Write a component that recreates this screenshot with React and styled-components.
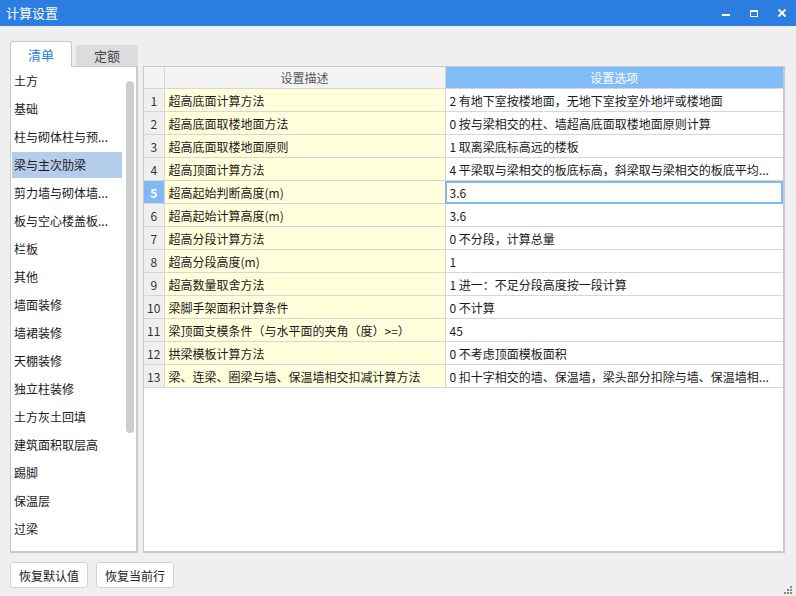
import React from 'react';
import styled, { createGlobalStyle } from 'styled-components';

const GlobalStyle = createGlobalStyle`
    html, body {
        margin: 0;
        padding: 0;
        background: #efefef;
    }
    body {
        font-family: "Noto Sans CJK SC", "Microsoft YaHei", sans-serif;
        font-size: 12px;
        color: #222;
    }
`;

const Window = styled.div`
    width: 796px;
    height: 596px;
    display: flex;
    flex-direction: column;
    background: #efefef;
    overflow: hidden;
`;

const TitleBar = styled.div`
    height: 26px;
    flex: none;
    background: #2b7de0;
    display: flex;
    align-items: center;
    justify-content: space-between;
`;

const Title = styled.div`
    color: #fff;
    font-size: 13px;
    padding-left: 6px;
    line-height: 26px;
`;

const Controls = styled.div`
    display: flex;
    height: 26px;
`;

const ControlButton = styled.div`
    width: 28px;
    height: 26px;
    display: flex;
    align-items: center;
    justify-content: center;
`;

const Body = styled.div`
    flex: 1;
    display: flex;
    flex-direction: column;
    padding: 15px 11px 0 10px;
`;

const TabRow = styled.div`
    display: flex;
    align-items: flex-end;
    height: 25px;
    gap: 4px;
`;

const Tab = styled.div`
    width: ${p => (p.$active ? '60px' : '62px')};
    height: ${p => (p.$active ? '25px' : '21px')};
    display: flex;
    align-items: center;
    justify-content: center;
    background: ${p => (p.$active ? '#fff' : '#dcdcdc')};
    color: ${p => (p.$active ? '#2b7de0' : '#444')};
    border: ${p => (p.$active ? '1px solid #c9c9c9' : 'none')};
    border-bottom: none;
    border-radius: 3px 3px 0 0;
    font-size: 13px;
    position: relative;
    z-index: 1;
    margin-bottom: ${p => (p.$active ? '-1px' : '0')};
`;

const Content = styled.div`
    height: 487px;
    display: flex;
    gap: 5px;
    flex: none;
`;

const ListPanel = styled.div`
    width: 125px;
    background: #fff;
    border: 1px solid #c9c9c9;
    border-right-width: 2px;
    border-bottom-width: 2px;
    display: flex;
    overflow: hidden;
`;

const ItemList = styled.div`
    width: 110px;
    padding: 0 1px;
    display: flex;
    flex-direction: column;
`;

const Item = styled.div`
    height: 26px;
    margin: 1px 0;
    flex: none;
    line-height: 26px;
    padding-left: 2px;
    white-space: nowrap;
    overflow: hidden;
    font-size: 12px;
    color: #1a1a1a;
    background: ${p => (p.$selected ? '#b4cdeb' : 'transparent')};
`;

const ScrollTrack = styled.div`
    width: 8px;
    margin-left: 3px;
    padding-top: 14px;
`;

const ScrollThumb = styled.div`
    width: 8px;
    height: 352px;
    border-radius: 4px;
    background: #cdcdcd;
`;

const TablePanel = styled.div`
    flex: 1;
    background: #fff;
    border: 1px solid #c9c9c9;
    border-right-width: 2px;
    border-bottom-width: 2px;
    overflow: hidden;
`;

const Grid = styled.table`
    width: 100%;
    table-layout: fixed;
    border-collapse: collapse;
    font-size: 12px;
`;

const HeadCell = styled.th`
    height: 21px;
    padding: 0;
    font-weight: normal;
    font-size: 12px;
    text-align: center;
    border: 1px solid #d6d6d6;
    border-top: none;
    background: ${p => (p.$accent ? '#80bcf8' : '#f4f4f4')};
    color: ${p => (p.$accent ? '#fff' : '#555')};
    &:first-child { border-left: none; }
    &:last-child { border-right: none; }
`;

const NumCell = styled.td`
    height: 22px;
    padding: 0;
    text-align: center;
    border: 1px solid #d6d6d6;
    border-left: none;
    background: ${p => (p.$current ? '#80b9f6' : '#efefef')};
    color: ${p => (p.$current ? '#fff' : '#333')};
    font-weight: ${p => (p.$current ? 'bold' : 'normal')};
`;

const Cell = styled.td`
    height: 22px;
    padding: 0 0 0 4px;
    border: 1px solid #d6d6d6;
    white-space: nowrap;
    overflow: hidden;
    color: #1a1a1a;
    background: ${p => (p.$desc ? '#ffffdc' : '#fff')};
    outline: ${p => (p.$editing ? '2px solid #80b9f6' : 'none')};
    outline-offset: -2px;
    &:last-child { border-right: none; }
`;

const Footer = styled.div`
    flex: 1;
    display: flex;
    align-items: flex-start;
    gap: 8px;
    padding-top: 9px;
    margin-right: -11px;
`;

const Button = styled.button`
    width: 78px;
    height: 26px;
    padding: 0;
    background: #fff;
    border: 1px solid #d2d2d2;
    border-radius: 3px;
    font-family: inherit;
    font-size: 12px;
    color: #222;
`;

const Grip = styled.svg`
    margin-left: auto;
    align-self: flex-end;
    margin-bottom: 1px;
    margin-right: 3px;
`;

const categories = [
    '土方', '基础', '柱与砌体柱与预...', '梁与主次肋梁', '剪力墙与砌体墙...',
    '板与空心楼盖板...', '栏板', '其他', '墙面装修', '墙裙装修', '天棚装修',
    '独立柱装修', '土方灰土回填', '建筑面积取层高', '踢脚', '保温层', '过梁', '砌体加筋',
];

const rows = [
    ['超高底面计算方法', '2 有地下室按楼地面，无地下室按室外地坪或楼地面'],
    ['超高底面取楼地面方法', '0 按与梁相交的柱、墙超高底面取楼地面原则计算'],
    ['超高底面取楼地面原则', '1 取离梁底标高远的楼板'],
    ['超高顶面计算方法', '4 平梁取与梁相交的板底标高，斜梁取与梁相交的板底平均...'],
    ['超高起始判断高度(m)', '3.6'],
    ['超高起始计算高度(m)', '3.6'],
    ['超高分段计算方法', '0 不分段，计算总量'],
    ['超高分段高度(m)', '1'],
    ['超高数量取舍方法', '1 进一：不足分段高度按一段计算'],
    ['梁脚手架面积计算条件', '0 不计算'],
    ['梁顶面支模条件（与水平面的夹角（度）>=）', '45'],
    ['拱梁模板计算方法', '0 不考虑顶面模板面积'],
    ['梁、连梁、圈梁与墙、保温墙相交扣减计算方法', '0 扣十字相交的墙、保温墙，梁头部分扣除与墙、保温墙相...'],
];

const App = () => {
    const current = 5;
    return (
        <Window>
            <GlobalStyle />
            <TitleBar>
                <Title>计算设置</Title>
                <Controls>
                    <ControlButton>
                        <svg width="10" height="10" viewBox="0 0 10 10">
                            <rect x="1" y="6" width="8" height="2" fill="#fff" />
                        </svg>
                    </ControlButton>
                    <ControlButton>
                        <svg width="10" height="10" viewBox="0 0 10 10">
                            <rect x="1.5" y="2.5" width="7" height="6" fill="none" stroke="#fff" strokeWidth="1" />
                            <rect x="1" y="2" width="8" height="2" fill="#fff" />
                        </svg>
                    </ControlButton>
                    <ControlButton>
                        <svg width="10" height="10" viewBox="0 0 10 10">
                            <path d="M1.5 1.5 L8.5 8.5 M8.5 1.5 L1.5 8.5" stroke="#fff" strokeWidth="1.8" />
                        </svg>
                    </ControlButton>
                </Controls>
            </TitleBar>
            <Body>
                <TabRow>
                    <Tab $active>清单</Tab>
                    <Tab>定额</Tab>
                </TabRow>
                <Content>
                    <ListPanel>
                        <ItemList>
                            {categories.map(c => (
                                <Item key={c} $selected={c === '梁与主次肋梁'}>{c}</Item>
                            ))}
                        </ItemList>
                        <ScrollTrack>
                            <ScrollThumb />
                        </ScrollTrack>
                    </ListPanel>
                    <TablePanel>
                        <Grid>
                            <colgroup>
                                <col style={{ width: 20 }} />
                                <col style={{ width: 281 }} />
                                <col />
                            </colgroup>
                            <thead>
                                <tr>
                                    <HeadCell />
                                    <HeadCell>设置描述</HeadCell>
                                    <HeadCell $accent>设置选项</HeadCell>
                                </tr>
                            </thead>
                            <tbody>
                                {rows.map(([desc, value], i) => (
                                    <tr key={i}>
                                        <NumCell $current={i + 1 === current}>{i + 1}</NumCell>
                                        <Cell $desc>{desc}</Cell>
                                        <Cell $editing={i + 1 === current}>{value}</Cell>
                                    </tr>
                                ))}
                            </tbody>
                        </Grid>
                    </TablePanel>
                </Content>
                <Footer>
                    <Button>恢复默认值</Button>
                    <Button>恢复当前行</Button>
                    <Grip width="9" height="9" viewBox="0 0 9 9">
                        <rect x="6" y="0" width="2" height="2" fill="#888" />
                        <rect x="3" y="3" width="2" height="2" fill="#888" />
                        <rect x="6" y="3" width="2" height="2" fill="#888" />
                        <rect x="0" y="6" width="2" height="2" fill="#888" />
                        <rect x="3" y="6" width="2" height="2" fill="#888" />
                        <rect x="6" y="6" width="2" height="2" fill="#888" />
                    </Grip>
                </Footer>
            </Body>
        </Window>
    );
};

export default App;
